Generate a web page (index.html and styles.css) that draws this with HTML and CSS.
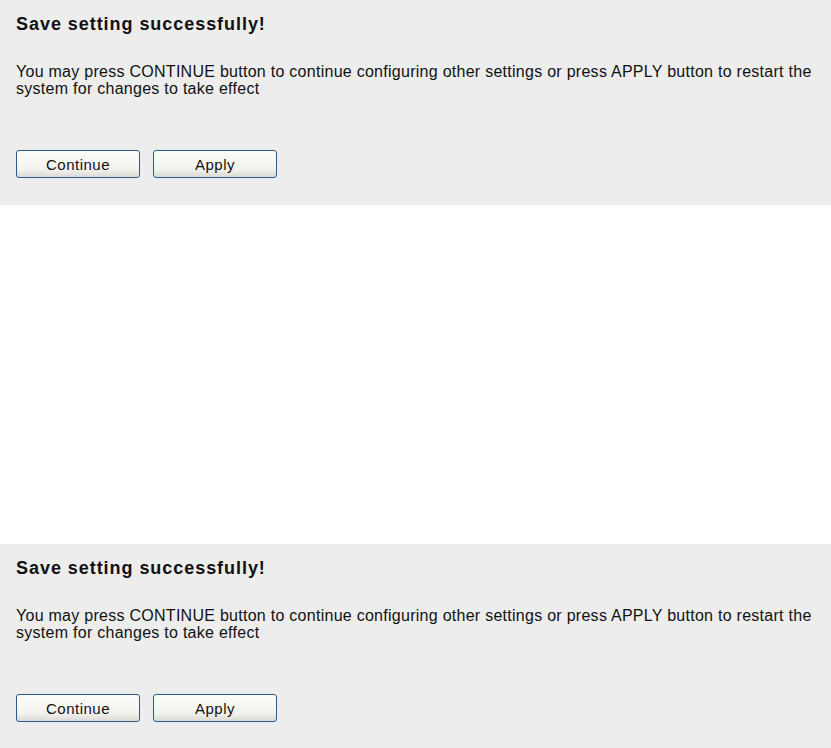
FILE: index.html
```html
<!DOCTYPE html>
<html>
<head>
<meta charset="utf-8">
<link rel="stylesheet" href="styles.css">
</head>
<body>
<div class="panel">
  <h1 class="title">Save setting successfully!</h1>
  <p class="msg">You may press CONTINUE button to continue configuring other settings or press APPLY button to restart the system for changes to take effect</p>
  <div class="actions">
    <button class="btn">Continue</button>
    <button class="btn">Apply</button>
  </div>
</div>
<div class="spacer"></div>
<div class="panel">
  <h1 class="title">Save setting successfully!</h1>
  <p class="msg">You may press CONTINUE button to continue configuring other settings or press APPLY button to restart the system for changes to take effect</p>
  <div class="actions">
    <button class="btn">Continue</button>
    <button class="btn">Apply</button>
  </div>
</div>
</body>
</html>
```
FILE: styles.css
```css
html, body {
  margin: 0;
  padding: 0;
  background: #ffffff;
}
body {
  font-family: "Liberation Sans", Arial, sans-serif;
  color: #000;
}
.panel {
  background: #ededed;
  height: 205px;
  box-sizing: border-box;
  padding: 14px 6px 0 16px;
}
.spacer {
  height: 339px;
}
.title {
  margin: 0;
  font-size: 18px;
  letter-spacing: 0.95px;
  font-weight: bold;
  line-height: 20px;
  color: #111;
}
.msg {
  margin: 29px 0 0 0;
  font-size: 16px;
  letter-spacing: 0.27px;
  line-height: 17px;
  color: #111;
}
.actions {
  margin-top: 53px;
  display: flex;
  gap: 13px;
}
.btn {
  width: 124px;
  height: 28px;
  font-family: "Liberation Sans", Arial, sans-serif;
  font-size: 15px;
  letter-spacing: 0.5px;
  color: #111;
  border: 1px solid #2b5a8e;
  border-radius: 3px;
  background: linear-gradient(#fdfdfb, #f3f2ee 70%, #dcdad3);
  padding: 0;
}
```
